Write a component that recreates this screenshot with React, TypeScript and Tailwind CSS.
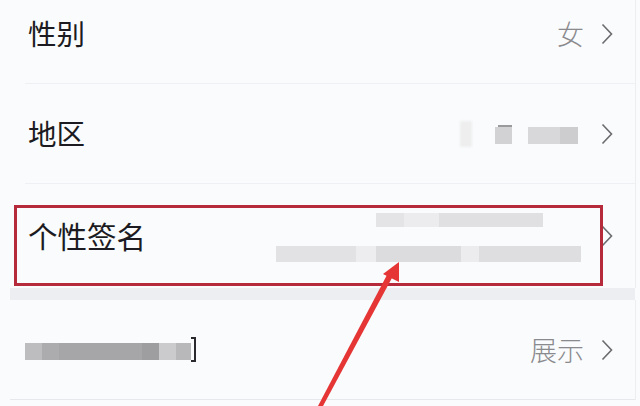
import React from "react";

function Chevron() {
  return (
    <svg width="12" height="22" viewBox="0 0 12 22" className="shrink-0">
      <polyline points="1.5,1.5 10.5,11 1.5,20.5" fill="none" stroke="#6b6b70" strokeWidth="1.6" strokeLinejoin="miter" />
    </svg>
  );
}

export default function App() {
  return (
    <div className="relative w-[640px] h-[406px] overflow-hidden bg-[#fafbfc] font-['Noto_Sans_CJK_SC',sans-serif] text-[#1c1b22]">
      <div className="mt-[-16px] border-r border-[#eceef0] mr-[4px]">
        {/* Row 1 */}
        <div className="ml-[25px] h-[100px] border-b border-[#eef0f3] flex items-center pl-[3px] pr-[22px]">
          <span className="text-[28.5px] leading-none">性别</span>
          <span className="ml-auto text-[27px] leading-none text-[#8a8a8e] font-light">女</span>
          <span className="ml-[17px]"><Chevron /></span>
        </div>
        {/* Row 2 */}
        <div className="ml-[25px] h-[100px] border-b border-[#eef0f3] flex items-center pl-[3px] pr-[22px]">
          <span className="text-[28.5px] leading-none">地区</span>
          <div className="ml-auto flex items-center">
            <div className="w-[12px] h-[26px] bg-[#eeeeef] blur-[1px]" />
            <div className="ml-[23px] flex flex-col items-start mt-[1px]">
              <div className="ml-[3px] w-[14px] h-[2px] bg-[#9a9a9c] blur-[0.4px]" />
              <div className="w-[17px] h-[17px] bg-[#d2d2d4] blur-[0.5px]" />
            </div>
            <div className="ml-[16px] flex h-[17px] mt-[4px] blur-[0.5px]">
              <div className="w-[32px] bg-[#d8d8da]" />
              <div className="w-[18px] bg-[#cdcdcf]" />
            </div>
          </div>
          <span className="ml-[23px]"><Chevron /></span>
        </div>
        {/* Row 3 */}
        <div className="ml-[25px] h-[104px] flex items-center pl-[3px] pr-[22px]">
          <span className="text-[29.5px] leading-none">个性签名</span>
          <div className="ml-auto flex flex-col items-end gap-[19px] mt-[2px]">
            <div className="mr-[38px] flex h-[14px] blur-[0.7px]">
              <div className="w-[28px] bg-[#e4e4e6]" />
              <div className="w-[35px] bg-[#ececee]" />
              <div className="w-[104px] bg-[#e0e0e2]" />
            </div>
            <div className="flex h-[16px] blur-[0.7px]">
              <div className="w-[80px] bg-[#e2e2e4]" />
              <div className="w-[20px] bg-[#ededef]" />
              <div className="w-[85px] bg-[#dcdcde]" />
              <div className="w-[18px] bg-[#ececee]" />
              <div className="w-[102px] bg-[#dedee0]" />
            </div>
          </div>
          <span className="ml-[20px]"><Chevron /></span>
        </div>
      </div>
      {/* gray separator */}
      <div className="ml-[10px] mr-[5px] h-[12px] bg-[#eceef1]" />
      {/* Row 4 */}
      <div className="ml-[10px] mr-[4px] border-r border-[#eceef0]">
        <div className="h-[100px] border-b border-[#e6e8eb] flex items-center pl-[15px] pr-[22px]">
          <div className="flex items-center mt-[4px]">
            <div className="flex h-[17px] blur-[0.6px]">
              <div className="w-[17px] bg-[#bdbdbf]" />
              <div className="w-[17px] bg-[#acacae]" />
              <div className="w-[83px] bg-[#a6a6a8]" />
              <div className="w-[17px] bg-[#9e9ea0]" />
              <div className="w-[17px] bg-[#cbcbcd]" />
              <div className="w-[15px] bg-[#b8b8ba]" />
            </div>
            <div className="w-[5px] h-[25px] border-r-[2px] border-y-[2px] border-[#2a2a2e] mt-[-4px]" />
          </div>
          <span className="ml-auto text-[27px] leading-none text-[#8a8a8e] font-light">展示</span>
          <span className="ml-[17px]"><Chevron /></span>
        </div>
      </div>

      {/* highlight box */}
      <div className="absolute left-[14px] top-[205px] w-[589px] h-[81px] border-[3px] border-[#b52b3c]" />

      {/* arrow */}
      <svg className="absolute left-0 top-0" width="640" height="406" viewBox="0 0 640 406">
        <polygon points="318,406 323,406 393,276 388,273" fill="#e53535" />
        <polygon points="399,262 383,274 399,282" fill="#e53535" />
      </svg>
    </div>
  );
}
